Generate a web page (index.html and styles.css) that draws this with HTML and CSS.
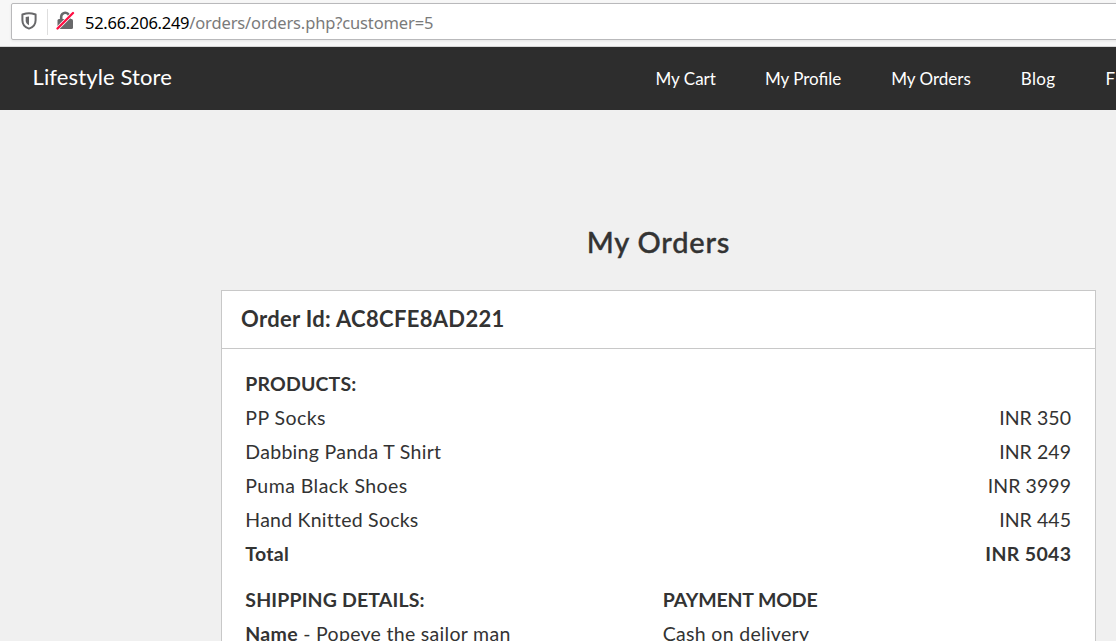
FILE: index.html
```html
<!DOCTYPE html>
<html lang="en">
<head>
<meta charset="utf-8">
<title>My Orders - Lifestyle Store</title>
<link rel="stylesheet" href="styles.css">
</head>
<body>
<div class="toolbar">
  <div class="address">
    <svg class="shield" width="16" height="18" viewBox="0 0 16 18"><path d="M8 1.2C10 1.2 12.5 1.8 14.6 2.5V8.200C14.6 12.500 12.400 15.200 8 16.600C3.600 15.200 1.400 12.500 1.400 8.200V2.500C3.500 1.800 6 1.200 8 1.200Z" fill="none" stroke="#68686a" stroke-width="2" stroke-linejoin="round"/><path d="M8 4.500V13.300C5.700 12.200 4.700 10.700 4.700 8.300V5Z" fill="#68686a"/></svg>
    <span class="divider"></span>
    <svg class="lock" width="19" height="19" viewBox="0 0 19 19"><path d="M5.200 9V5.800A4 4 0 0 1 13.200 5.800V9" fill="none" stroke="#68686a" stroke-width="2.600"/><rect x="1.500" y="8" width="15.500" height="10" rx="1.500" fill="#68686a"/><path d="M1.500 17.500L17 2" stroke="#fff" stroke-width="3.800"/><path d="M1.500 17.500L17 2" stroke="#ff0f43" stroke-width="2.300" stroke-linecap="round"/></svg>
    <span class="url"><span class="host">52.66.206.249</span>/orders/orders.php?customer=5</span>
  </div>
</div>
<nav class="navbar">
  <a class="brand">Lifestyle Store</a>
  <div class="links"><a class="cart">My Cart</a><a>My Profile</a><a>My Orders</a><a class="blog">Blog</a><a class="forum">Forum</a></div>
</nav>
<main class="page">
  <h1 class="title">My Orders</h1>
  <section class="order">
    <h2 class="order-id">Order Id: AC8CFE8AD221</h2>
    <div class="body">
      <div class="heading">PRODUCTS:</div>
      <div class="row"><span class="socks">PP Socks</span><span class="price">INR 350</span></div>
      <div class="row"><span class="shirt">Dabbing Panda T Shirt</span><span class="price">INR 249</span></div>
      <div class="row"><span class="shoes">Puma Black Shoes</span><span class="price">INR 3999</span></div>
      <div class="row"><span class="knitted">Hand Knitted Socks</span><span class="price">INR 445</span></div>
      <div class="row total"><span>Total</span><span class="sum">INR 5043</span></div>
      <div class="details">
        <div><div class="heading">SHIPPING DETAILS:</div><div class="name"><b>Name</b> - Popeye the sailor man</div></div>
        <div><div class="heading payment">PAYMENT MODE</div><div>Cash on delivery</div></div>
      </div>
    </div>
  </section>
</main>
</body>
</html>
```
FILE: styles.css
```css
* { box-sizing: border-box; }
body { margin: 0; height: 641px; overflow: hidden; display: flex; flex-direction: column; background: #f0f0f0; color: #333; font-family: Lato, "Liberation Sans", sans-serif; }
.toolbar { flex: none; height: 47px; padding: 3px 0 0 11px; background: #f7f7f7; border-bottom: 1px solid #d6d6d6; overflow: hidden; }
.address { display: flex; align-items: center; height: 37px; width: 1120px; padding-left: 9px; background: #fff; border: 1px solid #b9b9bb; border-radius: 2px; box-shadow: 0 1px 3px rgba(0,0,0,.08); }
.shield { margin-top: -2px; }
.divider { width: 1px; height: 26px; margin: 0 8px 0 10px; background: #dedede; }
.lock { flex: none; margin-top: -2px; }
.url { margin: 2px 0 0 10px; color: #7a7a7a; font: 16.500px/24px "Noto Sans", sans-serif; letter-spacing: -.14px; white-space: nowrap; }
.host { color: #000; letter-spacing: -.26px; }
.navbar { flex: none; display: flex; align-items: center; justify-content: space-between; height: 63px; padding-left: 32.500px; background: #2d2d2d; color: #fff; overflow: hidden; }
.brand { padding-bottom: 3px; font-size: 22px; line-height: 26px; letter-spacing: .12px; }
.links { display: flex; flex: none; width: 460.500px; gap: 50px; font-size: 17px; line-height: 24px; white-space: nowrap; }
.cart { margin-right: -1px; }
.blog { letter-spacing: .35px; }
.forum { letter-spacing: 1.500px; }
.page { flex: 1; min-height: 0; overflow: hidden; padding: 112px 20px 0 221px; }
.title { margin: 0; height: 68px; font-size: 29px; line-height: 39px; font-weight: 500; letter-spacing: .8px; text-align: center; -webkit-text-stroke: .4px #333; }
.order { height: 351px; overflow: hidden; background: #fff; border: 1px solid #c8c8c8; border-bottom: 0; }
.order-id { margin: 0; height: 58px; padding-left: 19px; border-bottom: 1px solid #c8c8c8; font-size: 22px; line-height: 55px; font-weight: 700; letter-spacing: .32px; }
.body { padding: 18px 24px 0 23.300px; font-size: 19.500px; line-height: 34px; letter-spacing: .3px; }
.heading, .total, b { font-weight: 700; }
.heading { letter-spacing: .15px; }
.payment { letter-spacing: -.15px; }
.row { display: flex; justify-content: space-between; }
.socks, .shoes { letter-spacing: .45px; }
.knitted { letter-spacing: .24px; }
.price { letter-spacing: .05px; }
.sum { letter-spacing: .35px; margin-right: -.4px; }
.details { display: grid; grid-template-columns: 417.500px 1fr; margin-top: 12px; }
```
